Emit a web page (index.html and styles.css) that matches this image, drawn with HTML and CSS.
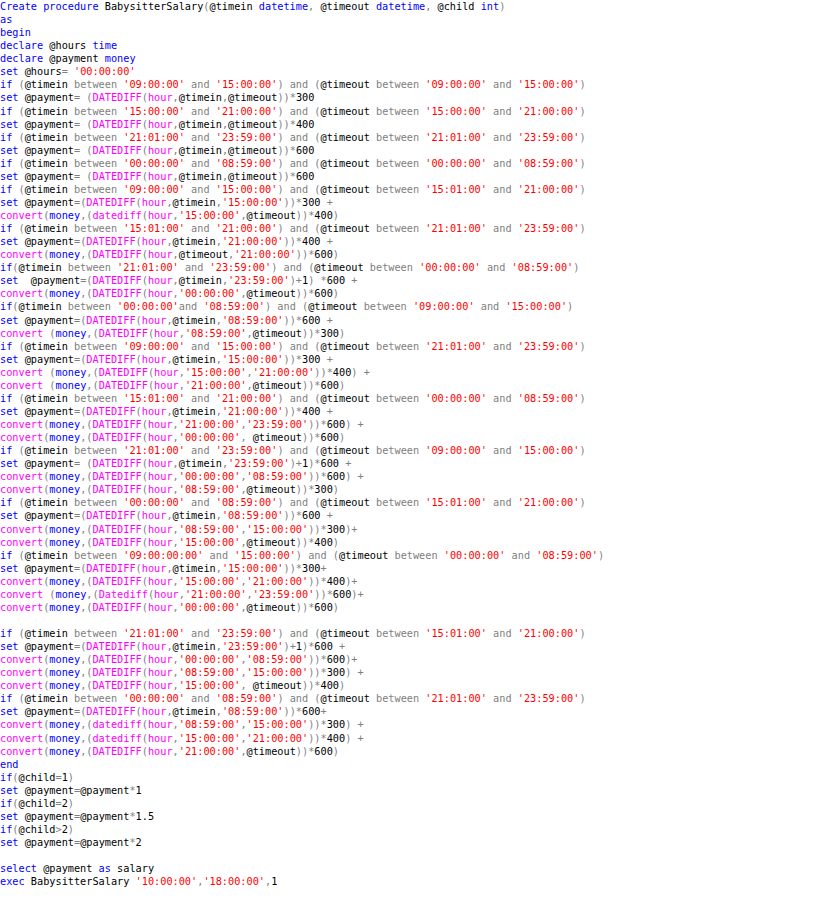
FILE: index.html
```html
<!DOCTYPE html>
<html lang="en">
<head>
<meta charset="utf-8">
<title>BabysitterSalary</title>
<link rel="stylesheet" href="styles.css">
</head>
<body>
<pre class="code"><span class="k">Create procedure</span> BabysitterSalary<span class="g">(</span>@timein <span class="k">datetime</span><span class="g">,</span> @timeout <span class="k">datetime</span><span class="g">,</span> @child <span class="k">int</span><span class="g">)</span>
<span class="k">as</span>
<span class="k">begin</span>
<span class="k">declare</span> @hours <span class="k">time</span>
<span class="k">declare</span> @payment <span class="k">money</span>
<span class="k">set</span> @hours<span class="g">=</span> <span class="s">'00:00:00'</span>
<span class="k">if</span> <span class="g">(</span>@timein <span class="g">between</span> <span class="s">'09:00:00'</span> <span class="g">and</span> <span class="s">'15:00:00'</span><span class="g">) and (</span>@timeout <span class="g">between</span> <span class="s">'09:00:00'</span> <span class="g">and</span> <span class="s">'15:00:00'</span><span class="g">)</span>
<span class="k">set</span> @payment<span class="g">= (</span><span class="f">DATEDIFF</span><span class="g">(</span><span class="f">hour</span><span class="g">,</span>@timein<span class="g">,</span>@timeout<span class="g">))*</span>300
<span class="k">if</span> <span class="g">(</span>@timein <span class="g">between</span> <span class="s">'15:00:00'</span> <span class="g">and</span> <span class="s">'21:00:00'</span><span class="g">) and (</span>@timeout <span class="g">between</span> <span class="s">'15:00:00'</span> <span class="g">and</span> <span class="s">'21:00:00'</span><span class="g">)</span>
<span class="k">set</span> @payment<span class="g">= (</span><span class="f">DATEDIFF</span><span class="g">(</span><span class="f">hour</span><span class="g">,</span>@timein<span class="g">,</span>@timeout<span class="g">))*</span>400
<span class="k">if</span> <span class="g">(</span>@timein <span class="g">between</span> <span class="s">'21:01:00'</span> <span class="g">and</span> <span class="s">'23:59:00'</span><span class="g">) and (</span>@timeout <span class="g">between</span> <span class="s">'21:01:00'</span> <span class="g">and</span> <span class="s">'23:59:00'</span><span class="g">)</span>
<span class="k">set</span> @payment<span class="g">= (</span><span class="f">DATEDIFF</span><span class="g">(</span><span class="f">hour</span><span class="g">,</span>@timein<span class="g">,</span>@timeout<span class="g">))*</span>600
<span class="k">if</span> <span class="g">(</span>@timein <span class="g">between</span> <span class="s">'00:00:00'</span> <span class="g">and</span> <span class="s">'08:59:00'</span><span class="g">) and (</span>@timeout <span class="g">between</span> <span class="s">'00:00:00'</span> <span class="g">and</span> <span class="s">'08:59:00'</span><span class="g">)</span>
<span class="k">set</span> @payment<span class="g">= (</span><span class="f">DATEDIFF</span><span class="g">(</span><span class="f">hour</span><span class="g">,</span>@timein<span class="g">,</span>@timeout<span class="g">))*</span>600
<span class="k">if</span> <span class="g">(</span>@timein <span class="g">between</span> <span class="s">'09:00:00'</span> <span class="g">and</span> <span class="s">'15:00:00'</span><span class="g">) and (</span>@timeout <span class="g">between</span> <span class="s">'15:01:00'</span> <span class="g">and</span> <span class="s">'21:00:00'</span><span class="g">)</span>
<span class="k">set</span> @payment<span class="g">=(</span><span class="f">DATEDIFF</span><span class="g">(</span><span class="f">hour</span><span class="g">,</span>@timein<span class="g">,</span><span class="s">'15:00:00'</span><span class="g">))*</span>300 <span class="g">+</span>
<span class="f">convert</span><span class="g">(</span><span class="k">money</span><span class="g">,(</span><span class="f">datediff</span><span class="g">(</span><span class="f">hour</span><span class="g">,</span><span class="s">'15:00:00'</span><span class="g">,</span>@timeout<span class="g">))*</span>400<span class="g">)</span>
<span class="k">if</span> <span class="g">(</span>@timein <span class="g">between</span> <span class="s">'15:01:00'</span> <span class="g">and</span> <span class="s">'21:00:00'</span><span class="g">) and (</span>@timeout <span class="g">between</span> <span class="s">'21:01:00'</span> <span class="g">and</span> <span class="s">'23:59:00'</span><span class="g">)</span>
<span class="k">set</span> @payment<span class="g">=(</span><span class="f">DATEDIFF</span><span class="g">(</span><span class="f">hour</span><span class="g">,</span>@timein<span class="g">,</span><span class="s">'21:00:00'</span><span class="g">))*</span>400 <span class="g">+</span>
<span class="f">convert</span><span class="g">(</span><span class="k">money</span><span class="g">,(</span><span class="f">DATEDIFF</span><span class="g">(</span><span class="f">hour</span><span class="g">,</span>@timeout<span class="g">,</span><span class="s">'21:00:00'</span><span class="g">))*</span>600<span class="g">)</span>
<span class="k">if</span><span class="g">(</span>@timein <span class="g">between</span> <span class="s">'21:01:00'</span> <span class="g">and</span> <span class="s">'23:59:00'</span><span class="g">) and (</span>@timeout <span class="g">between</span> <span class="s">'00:00:00'</span> <span class="g">and</span> <span class="s">'08:59:00'</span><span class="g">)</span>
<span class="k">set</span>  @payment<span class="g">=(</span><span class="f">DATEDIFF</span><span class="g">(</span><span class="f">hour</span><span class="g">,</span>@timein<span class="g">,</span><span class="s">'23:59:00'</span><span class="g">)+</span>1<span class="g">) *</span>600 <span class="g">+</span>
<span class="f">convert</span><span class="g">(</span><span class="k">money</span><span class="g">,(</span><span class="f">DATEDIFF</span><span class="g">(</span><span class="f">hour</span><span class="g">,</span><span class="s">'00:00:00'</span><span class="g">,</span>@timeout<span class="g">))*</span>600<span class="g">)</span>
<span class="k">if</span><span class="g">(</span>@timein <span class="g">between</span> <span class="s">'00:00:00'</span><span class="g">and</span> <span class="s">'08:59:00'</span><span class="g">) and (</span>@timeout <span class="g">between</span> <span class="s">'09:00:00'</span> <span class="g">and</span> <span class="s">'15:00:00'</span><span class="g">)</span>
<span class="k">set</span> @payment<span class="g">=(</span><span class="f">DATEDIFF</span><span class="g">(</span><span class="f">hour</span><span class="g">,</span>@timein<span class="g">,</span><span class="s">'08:59:00'</span><span class="g">))*</span>600 <span class="g">+</span>
<span class="f">convert</span> <span class="g">(</span><span class="k">money</span><span class="g">,(</span><span class="f">DATEDIFF</span><span class="g">(</span><span class="f">hour</span><span class="g">,</span><span class="s">'08:59:00'</span><span class="g">,</span>@timeout<span class="g">))*</span>300<span class="g">)</span>
<span class="k">if</span> <span class="g">(</span>@timein <span class="g">between</span> <span class="s">'09:00:00'</span> <span class="g">and</span> <span class="s">'15:00:00'</span><span class="g">) and (</span>@timeout <span class="g">between</span> <span class="s">'21:01:00'</span> <span class="g">and</span> <span class="s">'23:59:00'</span><span class="g">)</span>
<span class="k">set</span> @payment<span class="g">=(</span><span class="f">DATEDIFF</span><span class="g">(</span><span class="f">hour</span><span class="g">,</span>@timein<span class="g">,</span><span class="s">'15:00:00'</span><span class="g">))*</span>300 <span class="g">+</span>
<span class="f">convert</span> <span class="g">(</span><span class="k">money</span><span class="g">,(</span><span class="f">DATEDIFF</span><span class="g">(</span><span class="f">hour</span><span class="g">,</span><span class="s">'15:00:00'</span><span class="g">,</span><span class="s">'21:00:00'</span><span class="g">))*</span>400<span class="g">) +</span>
<span class="f">convert</span> <span class="g">(</span><span class="k">money</span><span class="g">,(</span><span class="f">DATEDIFF</span><span class="g">(</span><span class="f">hour</span><span class="g">,</span><span class="s">'21:00:00'</span><span class="g">,</span>@timeout<span class="g">))*</span>600<span class="g">)</span>
<span class="k">if</span> <span class="g">(</span>@timein <span class="g">between</span> <span class="s">'15:01:00'</span> <span class="g">and</span> <span class="s">'21:00:00'</span><span class="g">) and (</span>@timeout <span class="g">between</span> <span class="s">'00:00:00'</span> <span class="g">and</span> <span class="s">'08:59:00'</span><span class="g">)</span>
<span class="k">set</span> @payment<span class="g">=(</span><span class="f">DATEDIFF</span><span class="g">(</span><span class="f">hour</span><span class="g">,</span>@timein<span class="g">,</span><span class="s">'21:00:00'</span><span class="g">))*</span>400 <span class="g">+</span>
<span class="f">convert</span><span class="g">(</span><span class="k">money</span><span class="g">,(</span><span class="f">DATEDIFF</span><span class="g">(</span><span class="f">hour</span><span class="g">,</span><span class="s">'21:00:00'</span><span class="g">,</span><span class="s">'23:59:00'</span><span class="g">))*</span>600<span class="g">) +</span>
<span class="f">convert</span><span class="g">(</span><span class="k">money</span><span class="g">,(</span><span class="f">DATEDIFF</span><span class="g">(</span><span class="f">hour</span><span class="g">,</span><span class="s">'00:00:00'</span><span class="g">,</span> @timeout<span class="g">))*</span>600<span class="g">)</span>
<span class="k">if</span> <span class="g">(</span>@timein <span class="g">between</span> <span class="s">'21:01:00'</span> <span class="g">and</span> <span class="s">'23:59:00'</span><span class="g">) and (</span>@timeout <span class="g">between</span> <span class="s">'09:00:00'</span> <span class="g">and</span> <span class="s">'15:00:00'</span><span class="g">)</span>
<span class="k">set</span> @payment<span class="g">= (</span><span class="f">DATEDIFF</span><span class="g">(</span><span class="f">hour</span><span class="g">,</span>@timein<span class="g">,</span><span class="s">'23:59:00'</span><span class="g">)+</span>1<span class="g">)*</span>600 <span class="g">+</span>
<span class="f">convert</span><span class="g">(</span><span class="k">money</span><span class="g">,(</span><span class="f">DATEDIFF</span><span class="g">(</span><span class="f">hour</span><span class="g">,</span><span class="s">'00:00:00'</span><span class="g">,</span><span class="s">'08:59:00'</span><span class="g">))*</span>600<span class="g">) +</span>
<span class="f">convert</span><span class="g">(</span><span class="k">money</span><span class="g">,(</span><span class="f">DATEDIFF</span><span class="g">(</span><span class="f">hour</span><span class="g">,</span><span class="s">'08:59:00'</span><span class="g">,</span>@timeout<span class="g">))*</span>300<span class="g">)</span>
<span class="k">if</span> <span class="g">(</span>@timein <span class="g">between</span> <span class="s">'00:00:00'</span> <span class="g">and</span> <span class="s">'08:59:00'</span><span class="g">) and (</span>@timeout <span class="g">between</span> <span class="s">'15:01:00'</span> <span class="g">and</span> <span class="s">'21:00:00'</span><span class="g">)</span>
<span class="k">set</span> @payment<span class="g">=(</span><span class="f">DATEDIFF</span><span class="g">(</span><span class="f">hour</span><span class="g">,</span>@timein<span class="g">,</span><span class="s">'08:59:00'</span><span class="g">))*</span>600 <span class="g">+</span>
<span class="f">convert</span><span class="g">(</span><span class="k">money</span><span class="g">,(</span><span class="f">DATEDIFF</span><span class="g">(</span><span class="f">hour</span><span class="g">,</span><span class="s">'08:59:00'</span><span class="g">,</span><span class="s">'15:00:00'</span><span class="g">))*</span>300<span class="g">)+</span>
<span class="f">convert</span><span class="g">(</span><span class="k">money</span><span class="g">,(</span><span class="f">DATEDIFF</span><span class="g">(</span><span class="f">hour</span><span class="g">,</span><span class="s">'15:00:00'</span><span class="g">,</span>@timeout<span class="g">))*</span>400<span class="g">)</span>
<span class="k">if</span> <span class="g">(</span>@timein <span class="g">between</span> <span class="s">'09:00:00:00'</span> <span class="g">and</span> <span class="s">'15:00:00'</span><span class="g">) and (</span>@timeout <span class="g">between</span> <span class="s">'00:00:00'</span> <span class="g">and</span> <span class="s">'08:59:00'</span><span class="g">)</span>
<span class="k">set</span> @payment<span class="g">=(</span><span class="f">DATEDIFF</span><span class="g">(</span><span class="f">hour</span><span class="g">,</span>@timein<span class="g">,</span><span class="s">'15:00:00'</span><span class="g">))*</span>300<span class="g">+</span>
<span class="f">convert</span><span class="g">(</span><span class="k">money</span><span class="g">,(</span><span class="f">DATEDIFF</span><span class="g">(</span><span class="f">hour</span><span class="g">,</span><span class="s">'15:00:00'</span><span class="g">,</span><span class="s">'21:00:00'</span><span class="g">))*</span>400<span class="g">)+</span>
<span class="f">convert</span> <span class="g">(</span><span class="k">money</span><span class="g">,(</span><span class="f">Datediff</span><span class="g">(</span><span class="f">hour</span><span class="g">,</span><span class="s">'21:00:00'</span><span class="g">,</span><span class="s">'23:59:00'</span><span class="g">))*</span>600<span class="g">)+</span>
<span class="f">convert</span><span class="g">(</span><span class="k">money</span><span class="g">,(</span><span class="f">DATEDIFF</span><span class="g">(</span><span class="f">hour</span><span class="g">,</span><span class="s">'00:00:00'</span><span class="g">,</span>@timeout<span class="g">))*</span>600<span class="g">)</span>

<span class="k">if</span> <span class="g">(</span>@timein <span class="g">between</span> <span class="s">'21:01:00'</span> <span class="g">and</span> <span class="s">'23:59:00'</span><span class="g">) and (</span>@timeout <span class="g">between</span> <span class="s">'15:01:00'</span> <span class="g">and</span> <span class="s">'21:00:00'</span><span class="g">)</span>
<span class="k">set</span> @payment<span class="g">=(</span><span class="f">DATEDIFF</span><span class="g">(</span><span class="f">hour</span><span class="g">,</span>@timein<span class="g">,</span><span class="s">'23:59:00'</span><span class="g">)+</span>1<span class="g">)*</span>600 <span class="g">+</span>
<span class="f">convert</span><span class="g">(</span><span class="k">money</span><span class="g">,(</span><span class="f">DATEDIFF</span><span class="g">(</span><span class="f">hour</span><span class="g">,</span><span class="s">'00:00:00'</span><span class="g">,</span><span class="s">'08:59:00'</span><span class="g">))*</span>600<span class="g">)+</span>
<span class="f">convert</span><span class="g">(</span><span class="k">money</span><span class="g">,(</span><span class="f">DATEDIFF</span><span class="g">(</span><span class="f">hour</span><span class="g">,</span><span class="s">'08:59:00'</span><span class="g">,</span><span class="s">'15:00:00'</span><span class="g">))*</span>300<span class="g">) +</span>
<span class="f">convert</span><span class="g">(</span><span class="k">money</span><span class="g">,(</span><span class="f">DATEDIFF</span><span class="g">(</span><span class="f">hour</span><span class="g">,</span><span class="s">'15:00:00'</span><span class="g">,</span> @timeout<span class="g">))*</span>400<span class="g">)</span>
<span class="k">if</span> <span class="g">(</span>@timein <span class="g">between</span> <span class="s">'00:00:00'</span> <span class="g">and</span> <span class="s">'08:59:00'</span><span class="g">) and (</span>@timeout <span class="g">between</span> <span class="s">'21:01:00'</span> <span class="g">and</span> <span class="s">'23:59:00'</span><span class="g">)</span>
<span class="k">set</span> @payment<span class="g">=(</span><span class="f">DATEDIFF</span><span class="g">(</span><span class="f">hour</span><span class="g">,</span>@timein<span class="g">,</span><span class="s">'08:59:00'</span><span class="g">))*</span>600<span class="g">+</span>
<span class="f">convert</span><span class="g">(</span><span class="k">money</span><span class="g">,(</span><span class="f">datediff</span><span class="g">(</span><span class="f">hour</span><span class="g">,</span><span class="s">'08:59:00'</span><span class="g">,</span><span class="s">'15:00:00'</span><span class="g">))*</span>300<span class="g">) +</span>
<span class="f">convert</span><span class="g">(</span><span class="k">money</span><span class="g">,(</span><span class="f">datediff</span><span class="g">(</span><span class="f">hour</span><span class="g">,</span><span class="s">'15:00:00'</span><span class="g">,</span><span class="s">'21:00:00'</span><span class="g">))*</span>400<span class="g">) +</span>
<span class="f">convert</span><span class="g">(</span><span class="k">money</span><span class="g">,(</span><span class="f">DATEDIFF</span><span class="g">(</span><span class="f">hour</span><span class="g">,</span><span class="s">'21:00:00'</span><span class="g">,</span>@timeout<span class="g">))*</span>600<span class="g">)</span>
<span class="k">end</span>
<span class="k">if</span><span class="g">(</span>@child<span class="g">=</span>1<span class="g">)</span>
<span class="k">set</span> @payment<span class="g">=</span>@payment<span class="g">*</span>1
<span class="k">if</span><span class="g">(</span>@child<span class="g">=</span>2<span class="g">)</span>
<span class="k">set</span> @payment<span class="g">=</span>@payment<span class="g">*</span>1.5
<span class="k">if</span><span class="g">(</span>@child<span class="g">&gt;</span>2<span class="g">)</span>
<span class="k">set</span> @payment<span class="g">=</span>@payment<span class="g">*</span>2

<span class="k">select</span> @payment <span class="k">as</span> salary
<span class="k">exec</span> BabysitterSalary <span class="s">'10:00:00'</span><span class="g">,</span><span class="s">'18:00:00'</span><span class="g">,</span>1
</pre>
</body>
</html>
```

FILE: styles.css
```css
html, body {
  margin: 0;
  padding: 0;
  background: #ffffff;
}

.code {
  margin: 0;
  padding: 0;
  color: #000000;
  font-family: "DejaVu Sans Mono", monospace;
  font-size: 10.24px;
  line-height: 13.06px;
}

.k { color: #0000ff; }
.g { color: #808080; }
.s { color: #ff0000; }
.f { color: #ff00ff; }
```
